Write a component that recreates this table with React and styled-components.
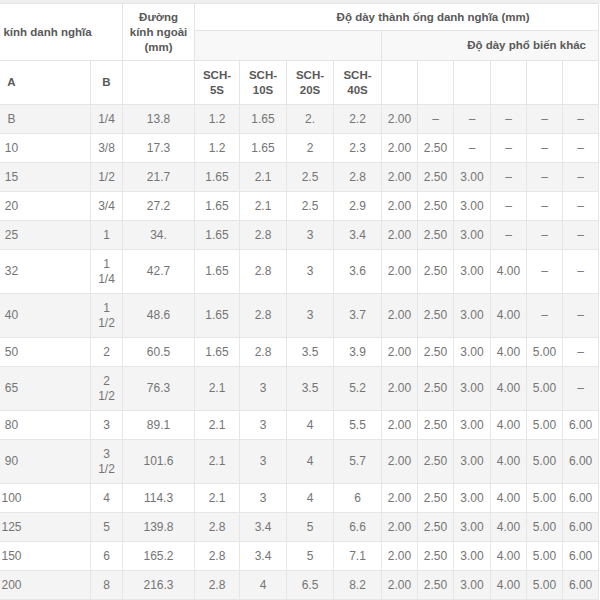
import React from "react";
import styled, { createGlobalStyle } from "styled-components";

const GlobalStyle = createGlobalStyle`
  html, body {
    margin: 0;
    padding: 0;
    background: #fff;
  }
  body {
    font-family: "Liberation Sans", Arial, sans-serif;
  }
`;

const Frame = styled.div`
  width: 600px;
  height: 600px;
  overflow: hidden;
  box-sizing: border-box;
  border-top: 3px solid #efefef;
`;

const Table = styled.table`
  margin-left: -68px;
  width: 666px;
  table-layout: fixed;
  border-collapse: collapse;
  font-size: 12px;
  line-height: 15px;
  color: #747474;
`;

const HeadRow = styled.tr`
  height: ${(props) => props.h}px;
  background: ${(props) => (props.shade ? "#f8f8f8" : "#fff")};
`;

const Th = styled.th`
  border: 1px solid #e4e4e4;
  padding: 5px 3px;
  padding-left: ${(props) => (props.shift ? props.shift : 3)}px;
  font-size: 11.5px;
  font-weight: bold;
  color: #595959;
  text-align: center;
  vertical-align: middle;
  background: ${(props) => (props.blank ? "#f8f8f8" : "inherit")};
`;

const Row = styled.tr`
  background: ${(props) => (props.striped ? "#f4f4f4" : "#fff")};
`;

const Td = styled.td`
  border: 1px solid #e6e6e6;
  padding: 6.5px 4px;
  text-align: center;
  vertical-align: middle;
`;

const colWidths = [158, 32, 72, 45, 47, 47, 48, 36, 36, 37, 36, 36, 36];

const schHeaders = ["SCH-5S", "SCH-10S", "SCH-20S", "SCH-40S"];

const rows = [
  ["B", "1/4", "13.8", "1.2", "1.65", "2.", "2.2", "2.00", "–", "–", "–", "–", "–"],
  ["10", "3/8", "17.3", "1.2", "1.65", "2", "2.3", "2.00", "2.50", "–", "–", "–", "–"],
  ["15", "1/2", "21.7", "1.65", "2.1", "2.5", "2.8", "2.00", "2.50", "3.00", "–", "–", "–"],
  ["20", "3/4", "27.2", "1.65", "2.1", "2.5", "2.9", "2.00", "2.50", "3.00", "–", "–", "–"],
  ["25", "1", "34.", "1.65", "2.8", "3", "3.4", "2.00", "2.50", "3.00", "–", "–", "–"],
  ["32", "1 1/4", "42.7", "1.65", "2.8", "3", "3.6", "2.00", "2.50", "3.00", "4.00", "–", "–"],
  ["40", "1 1/2", "48.6", "1.65", "2.8", "3", "3.7", "2.00", "2.50", "3.00", "4.00", "–", "–"],
  ["50", "2", "60.5", "1.65", "2.8", "3.5", "3.9", "2.00", "2.50", "3.00", "4.00", "5.00", "–"],
  ["65", "2 1/2", "76.3", "2.1", "3", "3.5", "5.2", "2.00", "2.50", "3.00", "4.00", "5.00", "–"],
  ["80", "3", "89.1", "2.1", "3", "4", "5.5", "2.00", "2.50", "3.00", "4.00", "5.00", "6.00"],
  ["90", "3 1/2", "101.6", "2.1", "3", "4", "5.7", "2.00", "2.50", "3.00", "4.00", "5.00", "6.00"],
  ["100", "4", "114.3", "2.1", "3", "4", "6", "2.00", "2.50", "3.00", "4.00", "5.00", "6.00"],
  ["125", "5", "139.8", "2.8", "3.4", "5", "6.6", "2.00", "2.50", "3.00", "4.00", "5.00", "6.00"],
  ["150", "6", "165.2", "2.8", "3.4", "5", "7.1", "2.00", "2.50", "3.00", "4.00", "5.00", "6.00"],
  ["200", "8", "216.3", "2.8", "4", "6.5", "8.2", "2.00", "2.50", "3.00", "4.00", "5.00", "6.00"],
];

function PipeTable() {
  return (
    <Table>
      <colgroup>
        {colWidths.map((w, i) => (
          <col key={i} style={{ width: w }} />
        ))}
      </colgroup>
      <thead>
        <HeadRow h={27}>
          <Th colSpan={2} rowSpan={2} shift={43}>
            kính danh nghĩa
          </Th>
          <Th rowSpan={2}>Đường kính ngoài (mm)</Th>
          <Th colSpan={10} shift={76}>
            Độ dày thành ống danh nghĩa (mm)
          </Th>
        </HeadRow>
        <HeadRow h={30}>
          <Th colSpan={4} blank />
          <Th colSpan={6} shift={76} blank>
            Độ dày phổ biến khác
          </Th>
        </HeadRow>
        <HeadRow h={44}>
          <Th>A</Th>
          <Th>B</Th>
          <Th />
          {schHeaders.map((s) => (
            <Th key={s}>{s}</Th>
          ))}
          {[0, 1, 2, 3, 4, 5].map((i) => (
            <Th key={i} />
          ))}
        </HeadRow>
      </thead>
      <tbody>
        {rows.map((r, i) => (
          <Row key={i} striped={i % 2 === 0}>
            {r.map((v, j) => (
              <Td key={j}>{v}</Td>
            ))}
          </Row>
        ))}
      </tbody>
    </Table>
  );
}

function App() {
  return (
    <>
      <GlobalStyle />
      <Frame>
        <PipeTable />
      </Frame>
    </>
  );
}

export default App;
